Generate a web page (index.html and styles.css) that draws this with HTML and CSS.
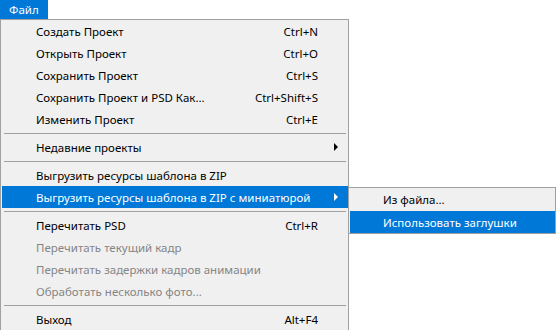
FILE: index.html
```html
<!DOCTYPE html>
<html lang="ru">
<head>
    <meta charset="UTF-8">
    <title>Файл</title>
    <link rel="stylesheet" href="styles.css">
</head>
<body>
    <div class="menubar">
        <span class="menubar-item active">Файл</span>
    </div>
    <div class="menu">
        <div class="item"><span class="label">Создать Проект</span><span class="shortcut">Ctrl+N</span></div>
        <div class="item"><span class="label">Открыть Проект</span><span class="shortcut">Ctrl+O</span></div>
        <div class="item"><span class="label">Сохранить Проект</span><span class="shortcut">Ctrl+S</span></div>
        <div class="item"><span class="label">Сохранить Проект и PSD Как...</span><span class="shortcut">Ctrl+Shift+S</span></div>
        <div class="item"><span class="label">Изменить Проект</span><span class="shortcut">Ctrl+E</span></div>
        <div class="separator"></div>
        <div class="item has-sub"><span class="label">Недавние проекты</span><span class="arrow"></span></div>
        <div class="separator"></div>
        <div class="item"><span class="label">Выгрузить ресурсы шаблона в ZIP</span></div>
        <div class="item has-sub selected">
            <span class="label">Выгрузить ресурсы шаблона в ZIP с миниатюрой</span><span class="arrow"></span>
            <div class="submenu">
                <div class="item"><span class="label">Из файла...</span></div>
                <div class="item selected"><span class="label">Использовать заглушки</span></div>
            </div>
        </div>
        <div class="separator"></div>
        <div class="item"><span class="label">Перечитать PSD</span><span class="shortcut">Ctrl+R</span></div>
        <div class="item disabled"><span class="label">Перечитать текущий кадр</span></div>
        <div class="item disabled"><span class="label">Перечитать задержки кадров анимации</span></div>
        <div class="item disabled"><span class="label">Обработать несколько фото...</span></div>
        <div class="separator"></div>
        <div class="item"><span class="label">Выход</span><span class="shortcut">Alt+F4</span></div>
    </div>
</body>
</html>
```

FILE: styles.css
```css
body {
    margin: 0;
    background: #fff;
    font-family: "Noto Sans", "Open Sans", sans-serif;
    font-size: 11.5px;
    color: #000;
    overflow: hidden;
    height: 331px;
}
.menubar {
    display: flex;
    height: 19px;
}
.menubar-item {
    padding: 0 9px;
    line-height: 19px;
    width: 30px;
}
.menubar-item.active {
    background: #0078d7;
    color: #fff;
}
.menu {
    width: 347px;
    border: 1px solid #a0a0a0;
    border-bottom: none;
    background: #f0f0f0;
}
.item {
    position: relative;
    display: flex;
    align-items: center;
    height: 22px;
    margin-left: 1px;
    padding: 0 30px 0 34px;
}
.item .label {
    flex: 1;
    white-space: nowrap;
}
.item .shortcut {
    white-space: nowrap;
}
.item.selected {
    background: #0078d7;
    color: #fff;
}
.item.disabled {
    color: #858585;
}
.arrow {
    position: absolute;
    right: 10px;
    top: 7px;
    width: 0;
    height: 0;
    border-top: 4px solid transparent;
    border-bottom: 4px solid transparent;
    border-left: 4px solid #000;
}
.item.selected .arrow {
    border-left-color: #fff;
}
.separator {
    height: 1px;
    margin: 3px 2px 2px 3px;
    background: #a0a0a0;
}
.submenu {
    position: absolute;
    left: 100%;
    top: 1px;
    width: 206px;
    border: 1px solid #a0a0a0;
    background: #f0f0f0;
    color: #000;
    display: flex;
    flex-direction: column;
    gap: 1px;
}
.submenu .item {
    padding-left: 33px;
}
```
